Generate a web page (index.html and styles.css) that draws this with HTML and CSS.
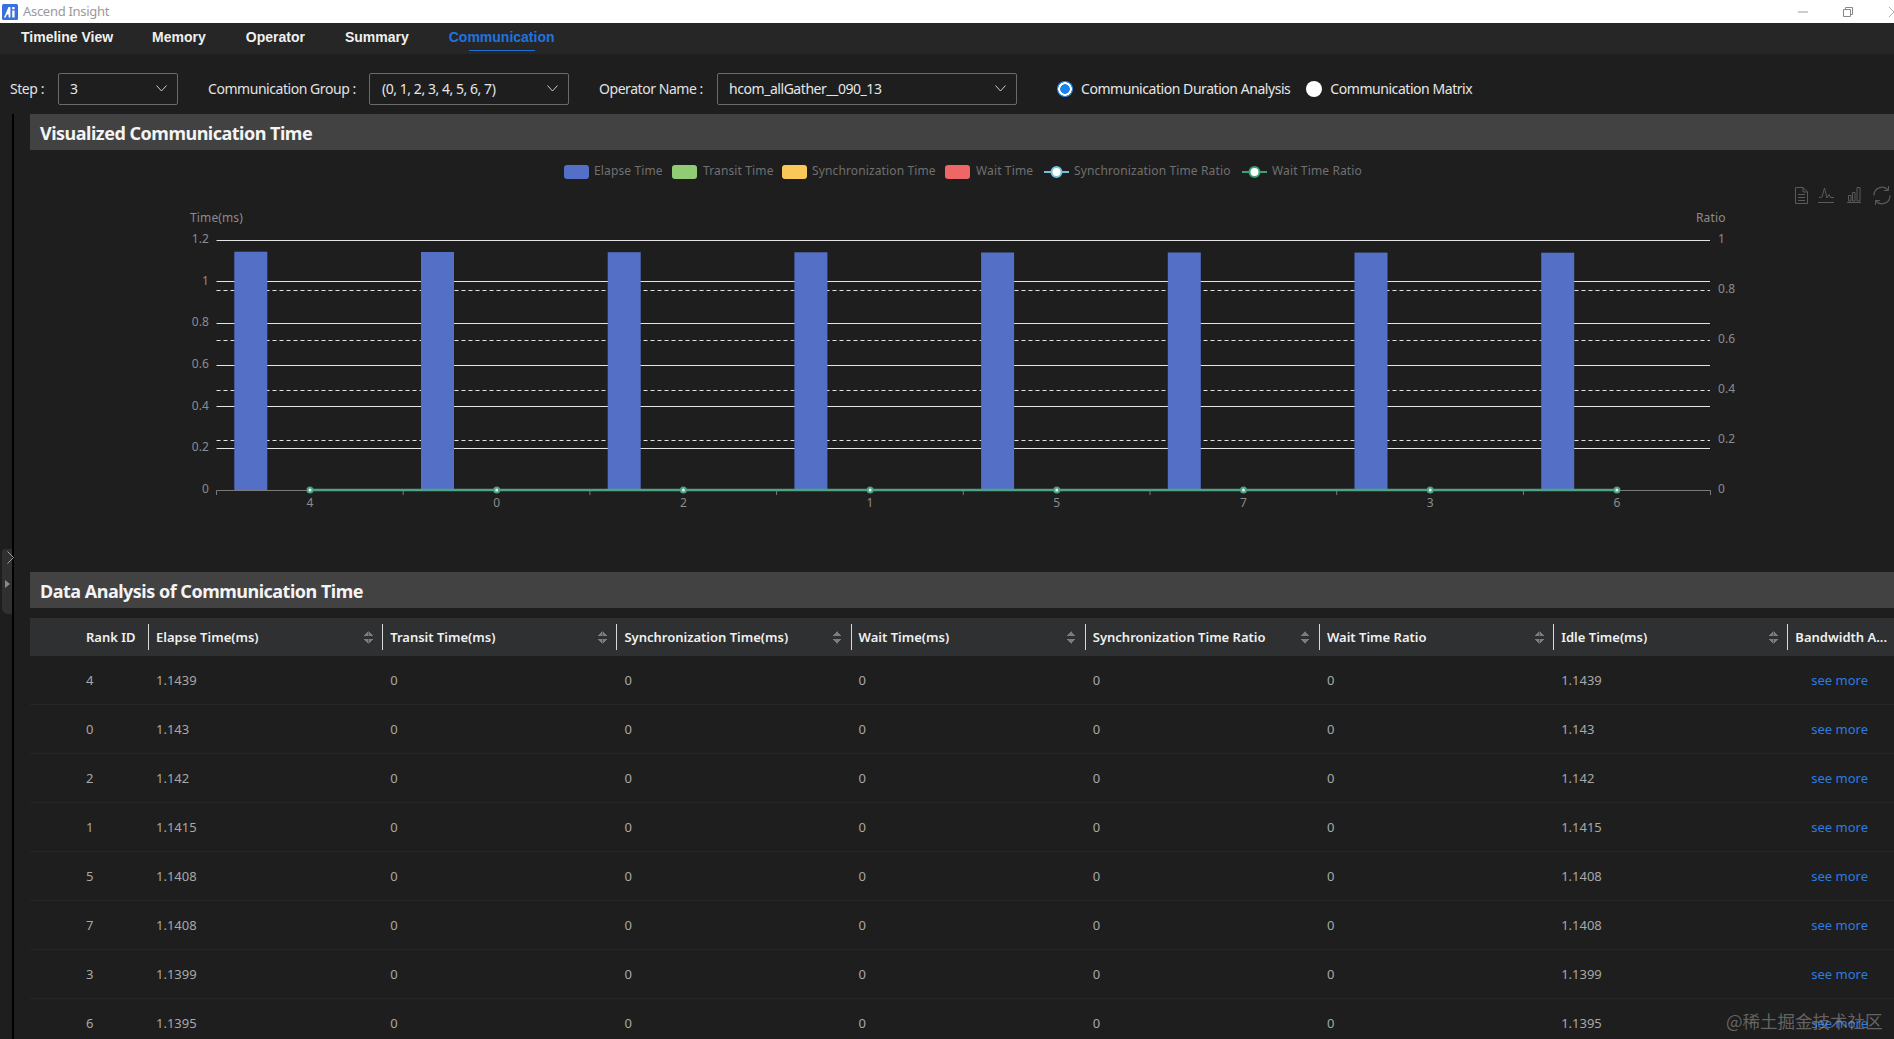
FILE: index.html
```html
<!DOCTYPE html>
<html lang="en">
<head>
<meta charset="utf-8">
<title>Ascend Insight</title>
<link rel="stylesheet" href="styles.css">
</head>
<body>
<div class="app">
  <header class="titlebar">
    <svg class="logo" viewBox="0 0 16 16" width="16" height="16"><rect width="16" height="16" rx="1.5" fill="#3b6fe0"/><path d="M2 13.5 L6.5 3 H8.4 V13.5 H6.6 V10.4 H4.9 L3.7 13.5 Z" fill="#fff"/><path d="M10.2 6.5 H12.6 V13.5 H10.2 Z M10.2 3 H12.6 V5.2 H10.2 Z" fill="#fff"/></svg>
    <span class="app-name">Ascend Insight</span>
    <div class="win-controls">
      <svg class="win-min" width="10" height="2" viewBox="0 0 10 2"><path d="M0 1H10" stroke="#999"/></svg>
      <svg class="win-restore" width="10" height="10" viewBox="0 0 10 10"><path d="M2.5 2.5V.5H9.5V7.5H7.5M.5 2.5H7.5V9.5H.5Z" fill="none" stroke="#888"/></svg>
      <svg class="win-close" width="5" height="10" viewBox="0 0 5 10"><path d="M0 0L5 5L0 10" fill="none" stroke="#aaa"/></svg>
    </div>
  </header>

  <nav class="tabs">
    <span class="tab">Timeline View</span>
    <span class="tab">Memory</span>
    <span class="tab">Operator</span>
    <span class="tab">Summary</span>
    <span class="tab tab-active">Communication</span>
  </nav>

  <div class="filters">
    <label class="field-label label-step">Step :</label>
    <div class="select select-step"><span>3</span><svg class="chev" width="11" height="7" viewBox="0 0 11 7"><path d="M.5 .5L5.5 6L10.5 .5" fill="none" stroke="#ccc"/></svg></div>
    <label class="field-label label-group">Communication Group :</label>
    <div class="select select-group"><span>(0, 1, 2, 3, 4, 5, 6, 7)</span><svg class="chev" width="11" height="7" viewBox="0 0 11 7"><path d="M.5 .5L5.5 6L10.5 .5" fill="none" stroke="#ccc"/></svg></div>
    <label class="field-label label-op">Operator Name :</label>
    <div class="select select-op"><span>hcom_allGather__090_13</span><svg class="chev" width="11" height="7" viewBox="0 0 11 7"><path d="M.5 .5L5.5 6L10.5 .5" fill="none" stroke="#ccc"/></svg></div>
    <span class="radio radio-on"></span><span class="radio-text">Communication Duration Analysis</span>
    <span class="radio radio-off"></span><span class="radio-text">Communication Matrix</span>
  </div>

  <div class="content">
    <aside class="rail">
      <div class="handle">
        <svg class="handle-tri" width="5" height="8" viewBox="0 0 5 8"><path d="M0 0L5 4L0 8Z" fill="#8a8a8a"/></svg>
      </div>
      <div class="rail-line"></div>
      <svg class="handle-chev" width="7" height="13" viewBox="0 0 7 13"><path d="M.5 .5L6.5 6.500L.5 12.500" fill="none" stroke="#a0a0a0"/></svg>
    </aside>
    <main class="main">
      <h2 class="section-title">Visualized Communication Time</h2>
      <div class="chart">
        <svg class="chart-svg" width="1864" height="422" viewBox="30 150 1864 422">
          <g class="legend-text">
            <rect x="564" y="165" width="25" height="14" rx="3" fill="#5470c6"/><text x="594" y="175">Elapse Time</text>
            <rect x="672" y="165" width="25" height="14" rx="3" fill="#91cc75"/><text x="703" y="175">Transit Time</text>
            <rect x="782" y="165" width="25" height="14" rx="3" fill="#fac858"/><text x="812" y="175">Synchronization Time</text>
            <rect x="945" y="165" width="25" height="14" rx="3" fill="#ee6666"/><text x="976" y="175">Wait Time</text>
            <path d="M1044 172H1069" stroke="#73c0de" stroke-width="2"/><circle cx="1056.500" cy="172" r="5" fill="#fff" stroke="#73c0de" stroke-width="2"/><text x="1074" y="175">Synchronization Time Ratio</text>
            <path d="M1242 172H1267" stroke="#3ba272" stroke-width="2"/><circle cx="1254.500" cy="172" r="5" fill="#fff" stroke="#3ba272" stroke-width="2"/><text x="1272" y="175">Wait Time Ratio</text>
          </g>

          <g class="toolbox" fill="none" stroke="#5a5a5a">
            <path d="M1795.500 187.500H1803L1807.500 192V203.500H1795.500ZM1803 187.500V192H1807.500M1798 194.500H1805M1798 197.500H1805M1798 200.500H1805"/>
            <path d="M1818 202.500H1834M1819 197.500L1822 197L1824.500 188L1827 198L1829 194.500L1830.500 197.500H1834"/>
            <path d="M1847 202.500H1861M1848.500 195.500H1851V201H1848.500ZM1852.500 192.500H1855V201H1852.500ZM1857 187.500H1860V201H1857Z"/>
            <path d="M1874 195.500A8 8 0 0 1 1888 190M1890 195.500A8 8 0 0 1 1876 201" stroke-width="1.200"/>
            <path d="M1888.500 186V190.500H1884M1875.500 205V200.500H1880"/>
          </g>

          <g class="axis-text">
            <text x="190" y="222">Time(ms)</text>
            <text x="1696" y="222">Ratio</text>
            <g text-anchor="end">
              <text x="209" y="243">1.2</text><text x="209" y="285">1</text><text x="209" y="326">0.8</text><text x="209" y="368">0.6</text><text x="209" y="410">0.4</text><text x="209" y="451">0.2</text><text x="209" y="493">0</text>
            </g>
            <g>
              <text x="1718" y="243">1</text><text x="1718" y="293">0.8</text><text x="1718" y="343">0.6</text><text x="1718" y="393">0.4</text><text x="1718" y="443">0.2</text><text x="1718" y="493">0</text>
            </g>
            <g text-anchor="middle">
              <text x="310" y="507">4</text><text x="496.700" y="507">0</text><text x="683.400" y="507">2</text><text x="870.100" y="507">1</text><text x="1056.800" y="507">5</text><text x="1243.500" y="507">7</text><text x="1430.200" y="507">3</text><text x="1616.900" y="507">6</text>
            </g>
          </g>

          <g stroke="#e4e4e4">
            <path d="M216.500 240.500H1710M216.500 281.500H1710M216.500 323.500H1710M216.500 365.500H1710M216.500 406.500H1710M216.500 448.500H1710"/>
          </g>
          <g stroke="#e4e4e4" stroke-dasharray="4 3">
            <path d="M216.500 290.500H1710M216.500 340.500H1710M216.500 390.500H1710M216.500 440.500H1710"/>
          </g>
          <g stroke="#7a7a7a" fill="none">
            <path d="M216.500 495V490.500H1710.500V495M403.200 490.500V495M589.900 490.500V495M776.600 490.500V495M963.300 490.500V495M1150 490.500V495M1336.700 490.500V495M1523.400 490.500V495"/>
          </g>

          <g fill="#5470c6">
            <rect x="234.300" y="251.700" width="33" height="238.300"/>
            <rect x="421" y="252" width="33" height="238"/>
            <rect x="607.700" y="252.200" width="33" height="237.800"/>
            <rect x="794.400" y="252.300" width="33" height="237.700"/>
            <rect x="981.100" y="252.500" width="33" height="237.500"/>
            <rect x="1167.800" y="252.500" width="33" height="237.500"/>
            <rect x="1354.500" y="252.600" width="33" height="237.400"/>
            <rect x="1541.200" y="252.700" width="33" height="237.300"/>
          </g>
          <path d="M310 490H1616.900" stroke="#4fa283" stroke-width="2.500"/>
          <g fill="#dff3ea" stroke="#4fa283" stroke-width="2">
            <circle cx="310" cy="490" r="2.500"/><circle cx="496.700" cy="490" r="2.500"/><circle cx="683.400" cy="490" r="2.500"/><circle cx="870.100" cy="490" r="2.500"/><circle cx="1056.800" cy="490" r="2.500"/><circle cx="1243.500" cy="490" r="2.500"/><circle cx="1430.200" cy="490" r="2.500"/><circle cx="1616.900" cy="490" r="2.500"/>
          </g>
        </svg>
      </div>

      <h2 class="section-title">Data Analysis of Communication Time</h2>
      <div class="table">
        <div class="tr th">
          <div class="cell c-rank"><span>Rank ID</span></div>
          <div class="cell"><span>Elapse Time(ms)</span><i class="sort"></i></div>
          <div class="cell"><span>Transit Time(ms)</span><i class="sort"></i></div>
          <div class="cell"><span>Synchronization Time(ms)</span><i class="sort"></i></div>
          <div class="cell"><span>Wait Time(ms)</span><i class="sort"></i></div>
          <div class="cell"><span>Synchronization Time Ratio</span><i class="sort"></i></div>
          <div class="cell"><span>Wait Time Ratio</span><i class="sort"></i></div>
          <div class="cell"><span>Idle Time(ms)</span><i class="sort"></i></div>
          <div class="cell"><span>Bandwidth A...</span></div>
        </div>
        <div class="tr"><div class="cell c-rank">4</div><div class="cell">1.1439</div><div class="cell">0</div><div class="cell">0</div><div class="cell">0</div><div class="cell">0</div><div class="cell">0</div><div class="cell">1.1439</div><div class="cell c-link">see more</div></div>
        <div class="tr"><div class="cell c-rank">0</div><div class="cell">1.143</div><div class="cell">0</div><div class="cell">0</div><div class="cell">0</div><div class="cell">0</div><div class="cell">0</div><div class="cell">1.143</div><div class="cell c-link">see more</div></div>
        <div class="tr"><div class="cell c-rank">2</div><div class="cell">1.142</div><div class="cell">0</div><div class="cell">0</div><div class="cell">0</div><div class="cell">0</div><div class="cell">0</div><div class="cell">1.142</div><div class="cell c-link">see more</div></div>
        <div class="tr"><div class="cell c-rank">1</div><div class="cell">1.1415</div><div class="cell">0</div><div class="cell">0</div><div class="cell">0</div><div class="cell">0</div><div class="cell">0</div><div class="cell">1.1415</div><div class="cell c-link">see more</div></div>
        <div class="tr"><div class="cell c-rank">5</div><div class="cell">1.1408</div><div class="cell">0</div><div class="cell">0</div><div class="cell">0</div><div class="cell">0</div><div class="cell">0</div><div class="cell">1.1408</div><div class="cell c-link">see more</div></div>
        <div class="tr"><div class="cell c-rank">7</div><div class="cell">1.1408</div><div class="cell">0</div><div class="cell">0</div><div class="cell">0</div><div class="cell">0</div><div class="cell">0</div><div class="cell">1.1408</div><div class="cell c-link">see more</div></div>
        <div class="tr"><div class="cell c-rank">3</div><div class="cell">1.1399</div><div class="cell">0</div><div class="cell">0</div><div class="cell">0</div><div class="cell">0</div><div class="cell">0</div><div class="cell">1.1399</div><div class="cell c-link">see more</div></div>
        <div class="tr"><div class="cell c-rank">6</div><div class="cell">1.1395</div><div class="cell">0</div><div class="cell">0</div><div class="cell">0</div><div class="cell">0</div><div class="cell">0</div><div class="cell">1.1395</div><div class="cell c-link">see more</div></div>
      </div>
    </main>
  </div>
  <div class="watermark">@稀土掘金技术社区</div>
</div>
</body>
</html>
```
FILE: styles.css
```css
* { box-sizing: border-box; }
html, body { margin: 0; height: 100%; overflow: hidden; background: #1e1e1e; }
body { font-family: "Noto Sans", "Noto Sans CJK SC", sans-serif; font-size: 14px; color: #e6e6e6; }
.app { position: relative; width: 1894px; height: 1039px; overflow: hidden; display: flex; flex-direction: column; }

.titlebar { height: 23px; background: #fff; display: flex; align-items: center; padding-left: 2px; flex: none; }
.logo { margin-right: 5px; flex: none; }
.app-name { font-size: 13px; line-height: 20px; margin-bottom: 2px; color: #9a9a9a; letter-spacing: -.3px; }
.win-controls { margin-left: auto; display: flex; align-items: center; }
.win-min { margin-right: 35px; }
.win-restore { margin-right: 36px; }
.win-close { display: block; }

.tabs { height: 31px; background: #262626; display: flex; flex: none; }
.tab { position: relative; padding: 0 20px; line-height: 28px; font-family: "Liberation Sans", sans-serif; font-weight: 700; font-size: 14px; color: #f0f0f0; }
.tab:first-child { padding-left: 21px; padding-right: 19px; }
.tab-active { color: #1f73e0; }
.tab-active::after { content: ""; position: absolute; left: 40px; right: 40px; top: 27px; height: 1px; background: #1f6fd0; }

.filters { height: 60px; flex: none; display: flex; align-items: center; padding: 10px 0 0 10px; background: #1e1e1e; letter-spacing: -.45px; }
.field-label { color: #e2e2e2; white-space: nowrap; margin-bottom: 2px; }
.label-step { width: 48px; }
.label-group { margin-left: 30px; width: 161px; }
.label-op { margin-left: 30px; width: 118px; }
.select { height: 32px; border: 1px solid #6a6a6a; border-radius: 2px; display: flex; align-items: center; justify-content: space-between; color: #e6e6e6; padding-bottom: 2px; }
.select-step { width: 120px; padding-left: 11px; padding-right: 10px; }
.select-group { width: 200px; padding-left: 12px; padding-right: 10px; }
.select-op { width: 300px; padding-left: 11px; padding-right: 10px; }
.radio { width: 16px; height: 16px; border-radius: 50%; background: #fff; flex: none; }
.radio-on { margin-left: 40px; background: radial-gradient(circle at center, #1783f0 0 4.500px, #fff 5px 6.500px, #2f8ff0 7px 8px); }
.radio-off { margin-left: 16px; }
.radio-text { margin-left: 8px; color: #e6e6e6; white-space: nowrap; margin-bottom: 2px; }

.content { flex: 1; display: flex; min-height: 0; }
.rail { width: 30px; flex: none; position: relative; }
.rail-line { position: absolute; left: 12px; width: 2px; top: 0; bottom: 0; background: #000; }
.handle { position: absolute; left: 2px; top: 435px; width: 10px; height: 65px; background: #303030; border-radius: 3px 0 0 6px; }
.handle-chev { position: absolute; left: 7px; top: 437px; }
.handle-tri { position: absolute; left: 3px; top: 31px; }

.main { flex: 1; min-width: 0; }
.section-title { margin: 0; height: 36px; line-height: 38px; padding-left: 10px; background: #424242; color: #f4f4f4; font-size: 18px; font-weight: 700; letter-spacing: -.5px; overflow: hidden; }

.chart { height: 422px; }
.chart-svg { display: block; }
.legend-text text { font-size: 12px; fill: #707070; font-family: "Noto Sans", sans-serif; letter-spacing: .13px; }
.axis-text text { font-size: 12px; fill: #8c8c8c; font-family: "Noto Sans", sans-serif; letter-spacing: .13px; }

.table { padding-top: 10px; }
.tr { display: grid; grid-template-columns: 118px repeat(7, 234.2px) 1fr; height: 49px; border-bottom: 1px solid #262626; align-items: center; color: #a8a8a8; font-size: 13px; }
.th { height: 38px; background: #2e3031; border-bottom: 0; color: #f0f0f0; font-weight: 600; font-size: 13px; }
.cell { padding-left: 8px; position: relative; white-space: nowrap; }
.c-rank { padding-left: 56px; }
.th .cell { height: 26px; line-height: 26px; border-left: 1px solid #d8d8d8; display: flex; justify-content: space-between; align-items: center; padding: 0 9px 0 7px; }
.th .c-rank { border-left: 0; padding-left: 56px; }
.sort { display: block; width: 9px; height: 13px; flex: none;
  background:
    linear-gradient(to bottom right, transparent 50%, #7c7c7c 50%) left top / 50% 5px no-repeat,
    linear-gradient(to bottom left, transparent 50%, #7c7c7c 50%) right top / 50% 5px no-repeat,
    linear-gradient(to top right, transparent 50%, #7c7c7c 50%) left bottom / 50% 5px no-repeat,
    linear-gradient(to top left, transparent 50%, #7c7c7c 50%) right bottom / 50% 5px no-repeat; }
.c-link { color: #2c7be0; text-align: center; padding-left: 0; padding-right: 2px; }

.watermark { position: absolute; left: 1726px; top: 1008px; font-size: 17.500px; line-height: 26px; color: rgba(160,160,160,.55); white-space: nowrap; font-family: "Noto Sans CJK SC", sans-serif; }
```
